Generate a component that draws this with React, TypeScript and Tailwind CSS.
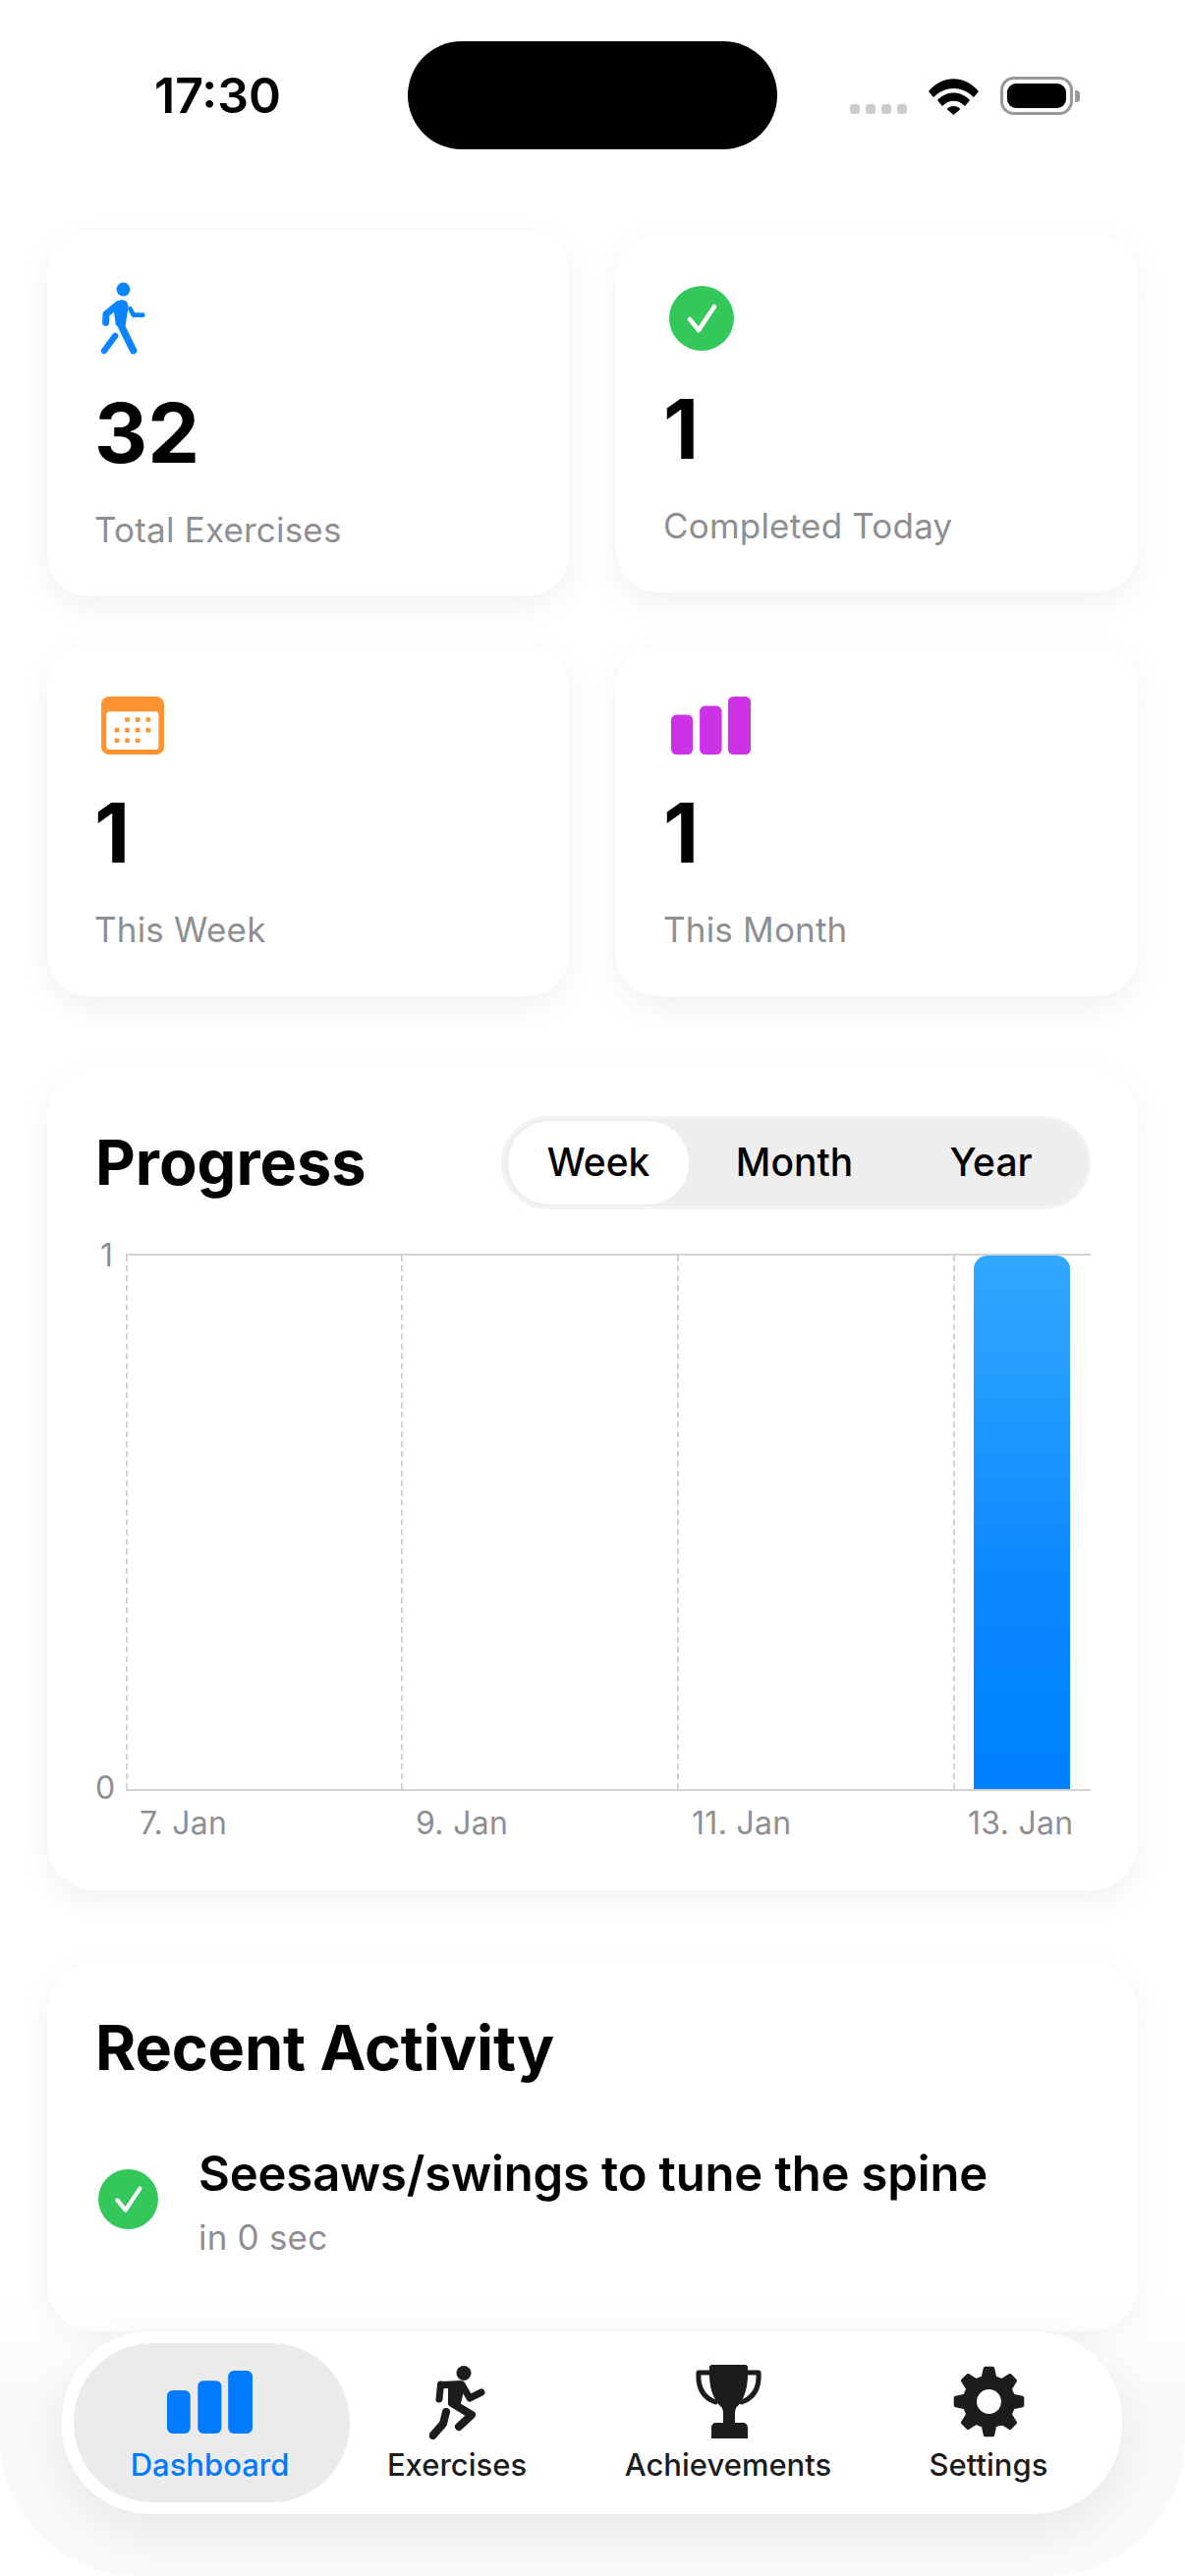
import type { ReactNode } from "react";

const font = "font-['Inter','Liberation_Sans',sans-serif]";

function gearPath() {
  const cx = 36.5;
  const cy = 36.5;
  const teeth = 8;
  const pts: string[] = [];
  for (let i = 0; i < teeth; i++) {
    const a = (i / teeth) * Math.PI * 2 - Math.PI / 2;
    const step = (Math.PI * 2) / teeth;
    const list: [number, number][] = [
      [a - step * 0.3, 25],
      [a - step * 0.14, 34],
      [a + step * 0.14, 34],
      [a + step * 0.3, 25],
    ];
    list.forEach(([t, r]) => {
      pts.push(`${(cx + Math.cos(t) * r).toFixed(1)} ${(cy + Math.sin(t) * r).toFixed(1)}`);
    });
  }
  return `M${pts.join("L")}Z`;
}

function Walker() {
  return (
    <svg viewBox="130 80 142 222" className="block h-[74px] w-[47px]" fill="none" stroke="#0a84ff" strokeLinecap="round" strokeLinejoin="round">
      <circle cx="201" cy="102" r="21" fill="#0a84ff" stroke="none" />
      <path d="M190 135 C210 132 220 145 215 165 L206 222 L178 212 L172 170Z" fill="#0a84ff" stroke="none" />
      <path d="M185 148 L148 178 L147 204" strokeWidth="21" />
      <path d="M190 205 L232 290" strokeWidth="22" />
      <path d="M222 162 L232 181 L261 181" strokeWidth="14" />
      <path d="M176 245 L142 291" strokeWidth="19" />
    </svg>
  );
}

function Check({ size }: { size: number }) {
  return (
    <svg viewBox="0 0 66 66" width={size} height={size} className="block shrink-0">
      <circle cx="33" cy="33" r="33" fill="#34c759" />
      <path d="M21 34 L30 45 L46 21" fill="none" stroke="#fff" strokeWidth="4.5" strokeLinecap="round" strokeLinejoin="round" />
    </svg>
  );
}

function CalendarIcon() {
  const dots = [
    [152, 133], [184, 133], [216, 133],
    [120, 165], [152, 165], [184, 165], [216, 165],
    [120, 197], [152, 197], [184, 197],
  ];
  return (
    <svg viewBox="72 62 193 178" className="block h-[59px] w-[64px]">
      <rect x="72" y="62" width="193" height="178" rx="24" fill="#ff9330" />
      <rect x="88" y="108" width="160" height="117" rx="10" fill="#fff" />
      {dots.map(([x, y]) => (
        <rect key={`${x}-${y}`} x={x - 7} y={y - 7} width="14" height="14" rx="3" fill="#ff9330" />
      ))}
    </svg>
  );
}

function BarsIcon({ fill, className }: { fill: string; className: string }) {
  return (
    <svg viewBox="70 58 242 182" preserveAspectRatio="none" className={className} fill={fill}>
      <rect x="70" y="115" width="66" height="125" rx="16" />
      <rect x="157" y="87" width="67" height="153" rx="16" />
      <rect x="243" y="58" width="69" height="182" rx="16" />
    </svg>
  );
}

function Runner() {
  return (
    <svg viewBox="0 0 57 75" className="block h-[75px] w-[57px]" fill="none" stroke="#1c1c1e" strokeLinecap="round" strokeLinejoin="round">
      <ellipse cx="35" cy="7.5" rx="7.5" ry="7.5" fill="#1c1c1e" stroke="none" />
      <path d="M12 16 L32 15 L36 22 L31 42 L19 38 L19 23 L12 23Z" fill="#1c1c1e" stroke="none" />
      <path d="M11.5 19 L10 34" strokeWidth="7" />
      <path d="M33 19 L41 33 L53 27" strokeWidth="7" />
      <path d="M23 38 L43 50 L30 62" strokeWidth="8" />
      <path d="M17 47 L14 59 L3.5 71" strokeWidth="8" />
    </svg>
  );
}

function Trophy() {
  return (
    <svg viewBox="0 0 67 75" className="mb-[1px] block h-[75px] w-[67px]" fill="#1c1c1e">
      <path d="M14 2 C14 1 15 0 17 0 H50 C52 0 53 1 53 2 C54 22 50 35 41 44 L40 48 V59 H48 C51 59 53 61 53 64 V75 H16 V64 C16 61 18 59 21 59 H28 V48 L27 44 C17 35 13 22 14 2Z" />
      <path d="M14 8 H3 C2 22 7 33 20 38 M53 8 H64 C65 22 60 33 47 38" fill="none" stroke="#1c1c1e" strokeWidth="5" strokeLinecap="round" strokeLinejoin="round" />
    </svg>
  );
}

function Gear() {
  return (
    <svg viewBox="0 0 73 73" className="mb-[2px] block h-[73px] w-[73px]">
      <path d={`${gearPath()}`} fill="#1c1c1e" stroke="#1c1c1e" strokeWidth="4" strokeLinejoin="round" />
      <circle cx="36.5" cy="36.5" r="12.5" fill="#fff" />
    </svg>
  );
}

function Wifi() {
  return (
    <svg viewBox="0 0 51 37" className="block h-[37px] w-[51px]" fill="#000">
      <path d="M0 13 C14 -4 37 -4 51 13 L46 19 C34 7 17 7 5 19Z" />
      <path d="M9 22 C18 12 33 12 42 22 L37 28 C30 21 21 21 14 28Z" />
      <path d="M18.5 31 C22 27 29 27 32.5 31 L25.5 37Z" />
    </svg>
  );
}

function StatCard({ icon, value, label, iconClass }: { icon: ReactNode; value: string; label: string; iconClass: string }) {
  return (
    <div className="rounded-[42px] bg-white px-[48px] pt-[52px] pb-[46px] shadow-[0_10px_32px_rgba(0,0,0,0.06)]">
      <div className={iconClass}>{icon}</div>
      <div className="mt-[30px] text-[84px] leading-[100px] font-bold text-black">{value}</div>
      <div className="mt-[26px] text-[35px] leading-[44px] tracking-[0.2px] text-[#8e8e93]">{label}</div>
    </div>
  );
}

function Tab({ icon, label, width, active }: { icon: ReactNode; label: string; width: string; active?: boolean }) {
  return (
    <div className={`flex flex-col items-center ${width} ${active ? "rounded-[80px] bg-[#ebebeb] pr-[4px]" : ""}`}>
      <div className="flex h-[98px] items-end">{icon}</div>
      <div className={`mt-[7px] text-[31px] leading-[38px] font-medium ${active ? "text-[#007aff]" : "text-[#1c1c1e]"}`}>{label}</div>
    </div>
  );
}

export default function App() {
  const cols = ["7. Jan", "9. Jan", "11. Jan", "13. Jan"];

  return (
    <div className={`relative h-[2622px] w-[1206px] overflow-hidden bg-white ${font}`}>
      {/* status bar */}
      <div className="flex h-[235px] items-start pt-[42px] pl-[157px]">
        <div className="flex h-[110px] w-[258px] items-center text-[50px] font-semibold text-black">17:30</div>
        <div className="h-[110px] w-[376px] rounded-[55px] bg-black" />
        <div className="mt-[36px] ml-[74px] flex items-end">
          <div className="mb-[1px] flex gap-[6px]">
            {[0, 1, 2, 3].map((i) => (
              <div key={i} className="h-[10px] w-[10px] rounded-[3px] bg-[#cccccc]" />
            ))}
          </div>
          <div className="ml-[22px]">
            <Wifi />
          </div>
          <div className="ml-[22px] flex items-center">
            <div className="h-[39px] w-[74px] rounded-[14px] border-[3px] border-[#999999] p-[4px]">
              <div className="h-full w-full rounded-[9px] bg-black" />
            </div>
            <div className="ml-[2px] h-[12px] w-[5px] rounded-r-[4px] bg-[#999999]" />
          </div>
        </div>
      </div>

      <div className="px-[48px]">
        {/* stat cards */}
        <div className="grid grid-cols-2 items-center gap-x-[48px] gap-y-[50px]">
          <StatCard icon={<Walker />} iconClass="ml-[6px]" value="32" label="Total Exercises" />
          <StatCard icon={<Check size={66} />} iconClass="ml-[6px]" value="1" label="Completed Today" />
          <StatCard icon={<CalendarIcon />} iconClass="ml-[7px]" value="1" label="This Week" />
          <StatCard icon={<BarsIcon fill="#cc33e6" className="block h-[59px] w-[81px]" />} iconClass="ml-[8px]" value="1" label="This Month" />
        </div>

        {/* progress */}
        <div className="mt-[74px] h-[836px] rounded-[48px] bg-white pt-[48px] pr-[48px] pl-[49px] shadow-[0_10px_32px_rgba(0,0,0,0.06)]">
          <div className="flex h-[95px] items-center justify-between">
            <div className="text-[63px] font-bold text-black">Progress</div>
            <div className="flex h-[95px] w-[600px] items-center rounded-[48px] border-[3px] border-[#f3f3f3] bg-[#eeeeee] pl-[4px] text-[39px] font-medium text-black">
              <div className="flex h-[85px] w-[185px] items-center justify-center rounded-[42px] bg-white">Week</div>
              <div className="w-[208px] pl-[8px] text-center">Month</div>
              <div className="w-[200px] pl-[2px] text-center">Year</div>
            </div>
          </div>

          <div className="mt-[45px] flex">
            <div className="flex h-[546px] w-[31px] flex-col justify-between pr-[13px] text-[32px] leading-[1] text-[#8e8e93]">
              <div className="-mt-[14px] text-right">1</div>
              <div className="-mb-[14px] text-right">0</div>
            </div>
            <div className="grid h-[547px] w-[982px] grid-cols-[280px_281px_281px_140px] border-y-2 border-[#d1d1d6]">
              {[0, 1, 2].map((i) => (
                <div key={i} className="border-l-2 border-dashed border-[#d1d1d6]" />
              ))}
              <div className="border-l-2 border-dashed border-[#d1d1d6] pl-[19px]">
                <div className="h-full w-[98px] rounded-t-[14px] bg-gradient-to-b from-[#30a8ff] via-[#0a88ff] via-60% to-[#0080ff]" />
              </div>
            </div>
          </div>

          <div className="mt-[14px] ml-[45px] flex text-[32px] leading-[38px] tracking-[0.3px] text-[#8e8e93]">
            {cols.map((c) => (
              <div key={c} className="w-[281px] shrink-0">{c}</div>
            ))}
          </div>
        </div>

        {/* recent activity */}
        <div className="mt-[74px] h-[375px] rounded-[48px] bg-white px-[49px] pt-[48px] shadow-[0_10px_32px_rgba(0,0,0,0.06)]">
          <div className="text-[63px] leading-[76px] font-bold tracking-[-0.2px] text-black">Recent Activity</div>
          <div className="mt-[61px] flex items-center">
            <div className="mb-[6px] ml-[3px]">
              <Check size={61} />
            </div>
            <div className="ml-[41px]">
              <div className="text-[49px] leading-[60px] font-semibold tracking-[-0.15px] text-black">Seesaws/swings to tune the spine</div>
              <div className="mt-[12px] text-[35px] leading-[44px] tracking-[0.2px] text-[#8e8e93]">in 0 sec</div>
            </div>
          </div>
        </div>
      </div>

      {/* tab bar */}
      <div className="absolute inset-x-0 bottom-0 h-[290px] rounded-b-[140px] bg-gradient-to-b from-white/0 via-[#f9f9f9] via-40% to-[#f9f9f9]" />
      <div className="absolute top-[2373px] left-[63px] flex h-[186px] w-[1079px] items-center rounded-[90px] bg-white pl-[12px] shadow-[0_16px_48px_rgba(0,0,0,0.07)]">
        <Tab
          active
          width="w-[281px] h-[162px]"
          label="Dashboard"
          icon={<div className="mb-[6px]"><BarsIcon fill="#007aff" className="block h-[64px] w-[87px]" /></div>}
        />
        <Tab width="w-[218px] h-[162px]" label="Exercises" icon={<Runner />} />
        <Tab width="w-[334px] h-[162px]" label="Achievements" icon={<Trophy />} />
        <Tab width="w-[196px] h-[162px]" label="Settings" icon={<Gear />} />
      </div>
    </div>
  );
}
